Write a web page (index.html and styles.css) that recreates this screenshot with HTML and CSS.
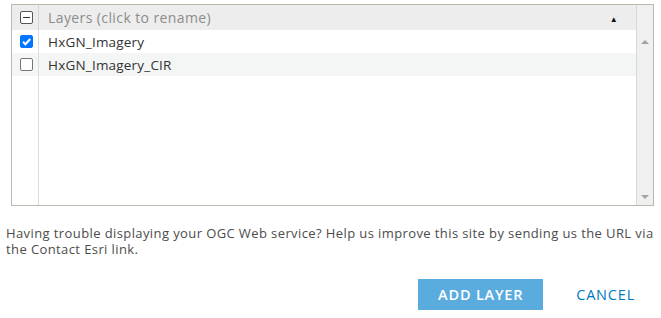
FILE: index.html
```html
<!DOCTYPE html>
<html lang="en">
  <head>
    <meta charset="UTF-8" />
    <title>Add Layer</title>
    <link rel="stylesheet" href="styles.css">
  </head>
  <body>
    <div class="dialog">
      <div class="grid">
        <div class="gridBody">
          <div class="row head">
            <div class="cell check"><span class="box partial"></span></div>
            <div class="cell name">Layers (click to rename)</div>
            <div class="sort">&#9650;</div>
          </div>
          <div class="row">
            <div class="cell check"><span class="box checked">
              <svg viewBox="0 0 13 13" width="13" height="13"><path d="M3 6.8l2.4 2.4L10.2 4" fill="none" stroke="#fff" stroke-width="2"/></svg>
            </span></div>
            <div class="cell name">HxGN_Imagery</div>
          </div>
          <div class="row alt">
            <div class="cell check"><span class="box"></span></div>
            <div class="cell name">HxGN_Imagery_CIR</div>
          </div>
          <div class="fill"><div class="cell check"></div></div>
        </div>
        <div class="scrollbar">
          <span class="arrow up"></span>
          <span class="arrow down"></span>
        </div>
      </div>
      <p class="note">Having trouble displaying your OGC Web service? Help us improve this site by sending us the URL via the Contact Esri link.</p>
      <div class="actions">
        <button class="btn primary">ADD LAYER</button>
        <button class="btn link">CANCEL</button>
      </div>
    </div>
  </body>
</html>
```
FILE: styles.css
```css
* {
  margin: 0;
  padding: 0;
  box-sizing: border-box;
}
body {
  background: #fff;
  font-family: "Open Sans", "Noto Sans", sans-serif;
  color: #4c4c4c;
}
.dialog {
  width: 661px;
  padding: 4px 0 0 0;
}
.grid {
  margin-left: 11px;
  width: 643px;
  height: 202px;
  border: 1px solid #b9b9ad;
  display: flex;
}
.gridBody {
  flex: 1;
  display: flex;
  flex-direction: column;
}
.row {
  display: flex;
  height: 23px;
  align-items: center;
  background: #fff;
  font-size: 13.5px;
  letter-spacing: 0.2px;
  color: #333;
}
.row.head {
  height: 25px;
  background: #ededed;
  color: #8c8c8c;
  font-size: 14px;
  letter-spacing: 0.4px;
  position: relative;
}
.row.alt {
  background: #f4f5f5;
}
.cell.check {
  width: 27px;
  height: 100%;
  border-right: 1px solid #dcdcdc;
  display: flex;
  align-items: center;
  justify-content: center;
  padding-left: 2px;
}
.head .cell.check {
  border-right-color: #d6d6d6;
}
.cell.name {
  padding-left: 9px;
}
.fill {
  flex: 1;
  display: flex;
}
.box {
  width: 13px;
  height: 13px;
  border: 1px solid #767676;
  border-radius: 2px;
  background: #fff;
  display: block;
  position: relative;
}
.box.checked {
  background: #0075ff;
  border-color: #0075ff;
}
.box.checked svg {
  position: absolute;
  left: -1px;
  top: -1px;
}
.box.partial {
  border-color: #555;
}
.box.partial::after {
  content: "";
  position: absolute;
  left: 2px;
  right: 2px;
  top: 5px;
  height: 1px;
  background: #333;
}
.sort {
  position: absolute;
  right: 18px;
  top: 8px;
  font-size: 8px;
  color: #111;
}
.scrollbar {
  width: 17px;
  background: #f0f0f0;
  border-left: 1px solid #d8d8d8;
  display: flex;
  flex-direction: column;
  justify-content: space-between;
  align-items: center;
  padding: 35px 0 6px;
}
.arrow {
  width: 0;
  height: 0;
  border-left: 4px solid transparent;
  border-right: 4px solid transparent;
}
.arrow.up {
  border-bottom: 4px solid #a3a3a3;
}
.arrow.down {
  border-top: 4px solid #a3a3a3;
}
.note {
  margin: 19px 0 0 6px;
  font-size: 13px;
  letter-spacing: 0.4px;
  line-height: 16px;
  color: #4c4c4c;
}
.actions {
  display: flex;
  justify-content: flex-end;
  align-items: center;
  margin-top: 22px;
  padding-right: 8px;
  gap: 15px;
}
.btn {
  font-family: "Open Sans", "Noto Sans", sans-serif;
  font-size: 14.5px;
  letter-spacing: 0.8px;
  border: none;
  cursor: pointer;
  height: 31px;
}
.btn.primary {
  background: #5aacdf;
  color: #fff;
  width: 125px;
  font-weight: 600;
}
.btn.link {
  background: none;
  color: #0079c1;
  padding: 0 18px;
}
```
